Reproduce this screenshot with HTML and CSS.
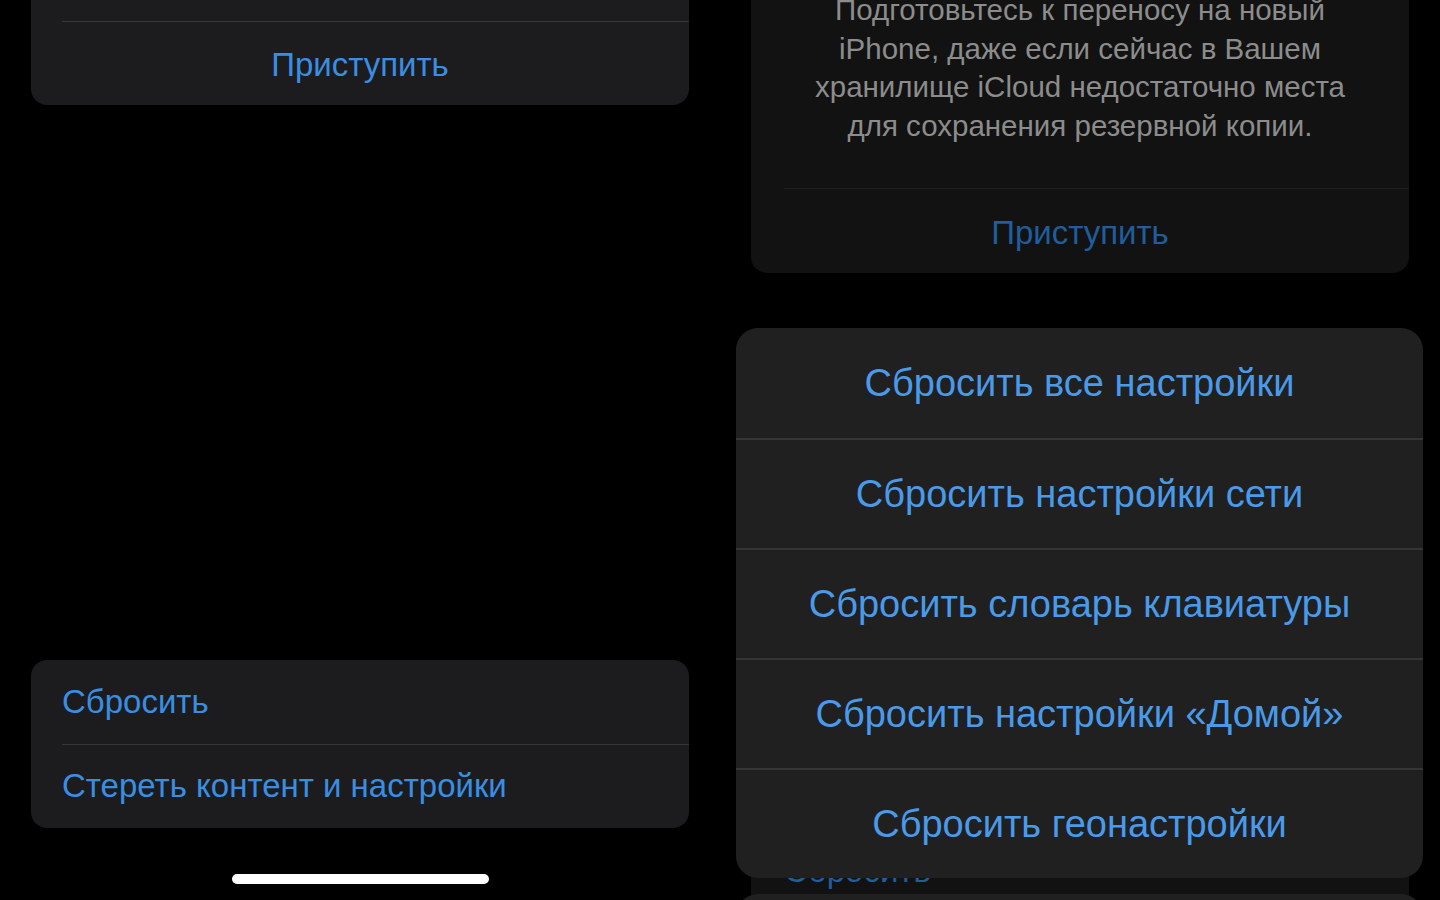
FILE: index.html
```
<!DOCTYPE html>
<html lang="ru">
<head>
    <meta charset="UTF-8">
    <meta name="viewport" content="width=device-width, initial-scale=1.0">
    <title>Перенос или сброс iPhone</title>
    <link rel="stylesheet" href="styles.css">
</head>
<body>
    <div class="screens">
        <!-- Left screen: transfer/reset page -->
        <section class="screen">
            <div class="group group-top">
                <div class="row row-clipped"></div>
                <div class="row row-center">Приступить</div>
            </div>

            <div class="group group-reset">
                <div class="row row-left">Сбросить</div>
                <div class="row row-left">Стереть контент и настройки</div>
            </div>

            <div class="home-indicator"></div>
        </section>

        <!-- Right screen: same page dimmed, with the reset action sheet on top -->
        <section class="screen screen-dimmed">
            <div class="group group-info">
                <p class="info-text">Подготовьтесь к переносу на новый<br>iPhone, даже если сейчас в Вашем<br>хранилище iCloud недостаточно места<br>для сохранения резервной копии.</p>
                <div class="row row-center">Приступить</div>
            </div>

            <div class="group group-reset-dim">
                <div class="row row-left">Сбросить</div>
                <div class="row row-left">Стереть контент и настройки</div>
            </div>

            <div class="action-sheet">
                <div class="sheet-group">
                    <div class="sheet-item">Сбросить все настройки</div>
                    <div class="sheet-item">Сбросить настройки сети</div>
                    <div class="sheet-item">Сбросить словарь клавиатуры</div>
                    <div class="sheet-item">Сбросить настройки «Домой»</div>
                    <div class="sheet-item">Сбросить геонастройки</div>
                </div>
                <div class="sheet-cancel">Отменить</div>
            </div>
        </section>
    </div>
</body>
</html>
```

FILE: styles.css
```
* {
    margin: 0;
    padding: 0;
    box-sizing: border-box;
}

body {
    background: #000;
    font-family: 'Liberation Sans', Arial, sans-serif;
    width: 1440px;
    height: 900px;
    overflow: hidden;
}

.screens {
    display: grid;
    grid-template-columns: 720px 720px;
    height: 900px;
}

.screen {
    position: relative;
    display: flex;
    flex-direction: column;
    align-items: center;
    overflow: hidden;
}

.screen > * {
    flex-shrink: 0;
}

/* Grouped list cards */
.group {
    width: 658px;
    background: #1c1c1e;
    border-radius: 16px;
    overflow: hidden;
}

.group-top {
    margin-top: -20px;
    border-radius: 0 0 16px 16px;
}

.row {
    height: 84px;
    display: flex;
    align-items: center;
    font-size: 33px;
    color: #3a8ee2;
    position: relative;
}

.row + .row::before {
    content: '';
    position: absolute;
    top: 0;
    left: 31px;
    right: 0;
    border-top: 1px solid #363638;
}

.row-clipped {
    height: 41px;
}

.row-center {
    justify-content: center;
    padding-top: 3px;
}

.row-left {
    padding-left: 31px;
}

.group-reset {
    margin-top: 555px;
}

.home-indicator {
    margin-top: 46px;
    width: 257px;
    height: 10px;
    border-radius: 5px;
    background: #fff;
}

/* Dimmed screen underneath the sheet */
.screen-dimmed .group {
    background: #121212;
}

.screen-dimmed .row {
    color: #1f5d9c;
}

.screen-dimmed .row + .row::before {
    border-color: #1e1e1e;
}

.group-info {
    margin-top: -28px;
    border-radius: 0 0 16px 16px;
}

.info-text {
    padding: 19px 20px 44px;
    text-align: center;
    font-size: 29.5px;
    line-height: 38.5px;
    color: #8c8c8c;
}

.group-info .row {
    border-top: 1px solid #1e1e1e;
    margin-left: 33px;
    padding-right: 33px;
    height: 85px;
    margin-top: -1px;
}

.group-reset-dim {
    margin-top: 556px;
}

.group-reset-dim .row-left {
    padding-left: 33px;
}

/* Action sheet overlay */
.action-sheet {
    position: absolute;
    top: 328px;
    left: 16px;
    width: 687px;
    display: flex;
    flex-direction: column;
    gap: 16px;
}

.sheet-group,
.sheet-cancel {
    background: #202020;
    border-radius: 22px;
    overflow: hidden;
}

.sheet-item,
.sheet-cancel {
    height: 110px;
    display: flex;
    align-items: center;
    justify-content: center;
    font-size: 38px;
    color: #4a9aea;
}

.sheet-item + .sheet-item {
    border-top: 2px solid #353535;
}

.sheet-cancel {
    font-weight: bold;
}
```
